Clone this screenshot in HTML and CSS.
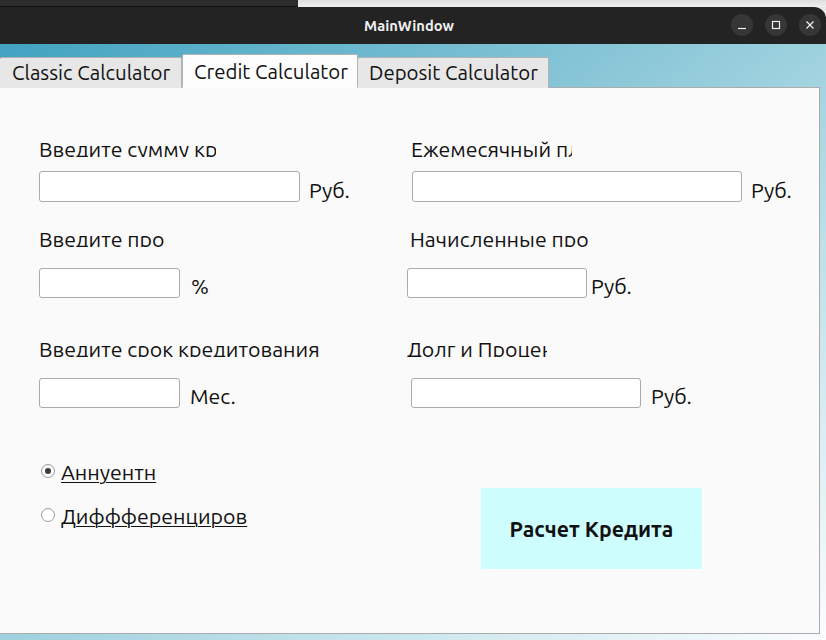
FILE: index.html
```html
<!DOCTYPE html>
<html lang="ru">
<head>
<meta charset="utf-8">
<title>MainWindow</title>
<link rel="stylesheet" href="styles.css">
</head>
<body>
<div class="screen">
  <div class="behind">
    <div class="behind-dark"></div>
    <div class="behind-light"></div>
  </div>
  <div class="window">
    <header class="titlebar">
      <div class="title">MainWindow</div>
      <div class="controls">
        <span class="ctl"><svg width="22" height="22" viewBox="0 0 22 22"><line x1="7" y1="14.5" x2="15" y2="14.5" stroke="#f2f2f2" stroke-width="1.2"/></svg></span>
        <span class="ctl"><svg width="22" height="22" viewBox="0 0 22 22"><rect x="7.5" y="7.5" width="7" height="7" fill="none" stroke="#f2f2f2" stroke-width="1.2"/></svg></span>
        <span class="ctl"><svg width="22" height="22" viewBox="0 0 22 22"><path d="M7.5 7.5 L14.5 14.5 M14.5 7.5 L7.5 14.5" stroke="#f2f2f2" stroke-width="1.2"/></svg></span>
      </div>
    </header>
    <main class="client">
      <nav class="tabs">
        <div class="tab tab-first">Classic Calculator</div>
        <div class="tab tab-active">Credit Calculator</div>
        <div class="tab tab-last">Deposit Calculator</div>
      </nav>
      <section class="pane">
        <div class="row row-1">
          <div class="cell">
            <div class="label lw-177">Введите сумму кредита</div>
            <div class="field">
              <input class="input iw-261 ih-31" type="text">
              <span class="unit">Руб.</span>
            </div>
          </div>
          <div class="cell cell-right">
            <div class="label lw-161 off-4">Ежемесячный платеж</div>
            <div class="field off-5">
              <input class="input iw-330 ih-31" type="text">
              <span class="unit">Руб.</span>
            </div>
          </div>
        </div>
        <div class="row row-2">
          <div class="cell">
            <div class="label lw-127">Введите процентную ставку</div>
            <div class="field">
              <input class="input iw-141" type="text">
              <span class="unit unit-wide">%</span>
            </div>
          </div>
          <div class="cell cell-right">
            <div class="label lw-178 off-3">Начисленные проценты</div>
            <div class="field">
              <input class="input iw-180" type="text">
              <span class="unit unit-tight">Руб.</span>
            </div>
          </div>
        </div>
        <div class="row row-3">
          <div class="cell">
            <div class="label lw-290">Введите срок кредитования</div>
            <div class="field">
              <input class="input iw-141" type="text">
              <span class="unit unit-mid">Мес.</span>
            </div>
          </div>
          <div class="cell cell-right">
            <div class="label lw-140">Долг и Проценты</div>
            <div class="field off-4">
              <input class="input iw-230" type="text">
              <span class="unit unit-mid">Руб.</span>
            </div>
          </div>
        </div>
        <div class="bottom">
          <div class="radios">
            <label class="radio"><span class="dot dot-on"></span><span class="radio-text">Аннуентн</span></label>
            <label class="radio"><span class="dot"></span><span class="radio-text">Диффференциров</span></label>
          </div>
          <button class="calc" type="button">Расчет Кредита</button>
        </div>
      </section>
    </main>
  </div>
</div>
</body>
</html>
```
FILE: styles.css
```css
* { box-sizing: border-box; }
html, body { margin: 0; padding: 0; }
body {
  width: 826px;
  height: 640px;
  overflow: hidden;
  background: #e9e9e9;
  font-family: "Ubuntu", "Noto Sans", "Open Sans", sans-serif;
  color: #111;
}
.screen { width: 826px; height: 640px; display: flex; flex-direction: column; }
.behind { height: 7px; display: flex; }
.behind-dark { width: 298px; background: #2c2c2c; border-bottom: 1px solid #111; }
.behind-light { flex: 1; background: linear-gradient(#dedede, #efefef); }
.window { flex: 1; display: flex; flex-direction: column; background: #e9e9e9; }
.titlebar {
  height: 37px;
  background: #232323;
  border-top-right-radius: 12px;
  display: flex;
  align-items: center;
  position: relative;
}
.title {
  flex: 1;
  text-align: center;
  color: #f0f0f0;
  font-weight: bold;
  font-size: 14.7px;
  padding-right: 8px;
}
.controls { position: absolute; right: 5px; top: 7px; display: flex; gap: 12px; }
.ctl { width: 22px; height: 22px; border-radius: 50%; background: #363636; display: block; }
.ctl svg { display: block; }
.client {
  flex: 1;
  background: linear-gradient(to bottom right, #42a3c1 0%, #9ed1de 50%, #fbfdfe 100%);
  display: flex;
  flex-direction: column;
  padding-top: 10px;
  padding-bottom: 6px;
}
.tabs { display: flex; align-items: flex-end; height: 34px; margin-bottom: -1px; position: relative; z-index: 1; }
.tab {
  height: 31px;
  padding: 0 0 0 11px;
  background: #e7e7e7;
  border: 1px solid #b3b3b3;
  border-bottom: none;
  border-radius: 2px 2px 0 0;
  font-size: 20.4px;
  line-height: 30px;
  color: #111;
  white-space: nowrap;
}
.tab-first { width: 182px; border-left: none; padding-left: 12px; }
.tab-active { height: 34px; width: 176px; background: #fdfdfd; border-bottom: 1px solid #fdfdfd; line-height: 33px; }
.tab-last { width: 191px; border-left: none; }
.pane {
  flex: 1;
  width: 820px;
  background: #fafafa;
  border: 1px solid #acacac;
  border-left: none;
  padding: 49px 0 0 39px;
  display: flex;
  flex-direction: column;
}
.row { display: flex; }
.row-2 { margin-top: 25px; }
.row-3 { margin-top: 39px; }
.cell { width: 368px; flex: none; display: flex; flex-direction: column; }
.cell-right { width: auto; }
.label {
  height: 20px;
  overflow: hidden;
  white-space: nowrap;
  font-size: 21.33px;
  line-height: 24px;
}
.off-3 { margin-left: 3px; }
.off-4 { margin-left: 4px; }
.off-5 { margin-left: 5px; }
.lw-177 { width: 177px; }
.lw-161 { width: 161px; }
.lw-127 { width: 127px; }
.lw-178 { width: 178px; }
.lw-290 { width: 300px; }
.lw-140 { width: 140px; }
.field { display: flex; align-items: center; margin-top: 21px; }
.row-1 .field { margin-top: 14px; }
.input {
  flex: none;
  height: 30px;
  border: 1px solid #ababab;
  border-radius: 3px;
  background: #fff;
  margin: 0;
  padding: 0 4px;
  font: inherit;
}
.ih-31 { height: 31px; }
.iw-261 { width: 261px; }
.iw-330 { width: 330px; }
.iw-141 { width: 141px; }
.iw-180 { width: 180px; }
.iw-230 { width: 230px; }
.unit { font-size: 21.33px; line-height: 24px; margin-left: 9px; padding-top: 6px; white-space: nowrap; }
.unit-wide { margin-left: 11px; }
.unit-mid { margin-left: 10px; }
.unit-tight { margin-left: 4px; }
.bottom { display: flex; margin-top: 52px; }
.radios { width: 442px; display: flex; flex-direction: column; gap: 20px; padding-left: 2px; }
.radio { display: flex; align-items: center; height: 24px; gap: 6px; font-size: 21.33px; line-height: 24px; }
.dot {
  width: 14px;
  height: 14px;
  border-radius: 50%;
  border: 1px solid #9a9a9a;
  background: #fff;
  display: flex;
  align-items: center;
  justify-content: center;
  margin-top: -2px;
}
.dot-on::after { content: ""; width: 6px; height: 6px; border-radius: 50%; background: #3c3c3c; }
.radio-text { text-decoration: underline; text-underline-offset: 2px; text-decoration-thickness: 1px; }
.calc {
  margin-top: 28px;
  width: 221px;
  height: 81px;
  background: #cefdfd;
  border: none;
  font: inherit;
  font-weight: bold;
  font-size: 21.33px;
  color: #111;
  padding: 0;
}
```
